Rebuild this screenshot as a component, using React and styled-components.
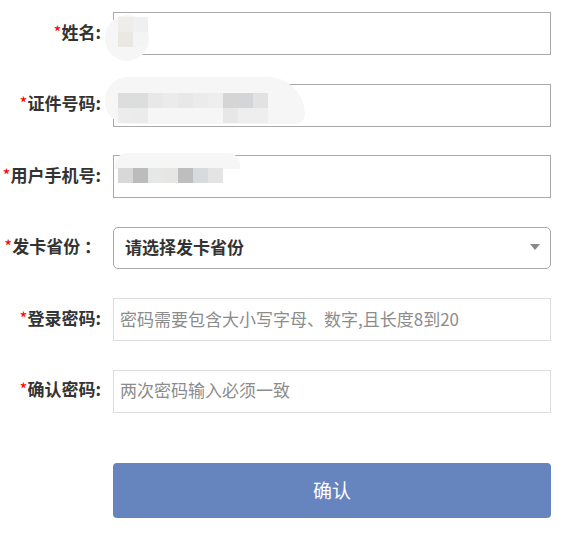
import React from "react";
import styled, { createGlobalStyle } from "styled-components";

const GlobalStyle = createGlobalStyle`
  body {
    margin: 0;
    background: #fff;
    font-family: "Noto Sans CJK SC", "Noto Sans", sans-serif;
  }
`;

const Form = styled.form`
  display: flex;
  flex-direction: column;
  gap: 28.5px;
  padding: 12px 0 0 0;
  width: 551px;
`;

const Row = styled.div`
  display: grid;
  grid-template-columns: 101px 438px;
  column-gap: 12px;
  align-items: center;
  height: 43px;
`;

const Label = styled.label`
  text-align: right;
  white-space: nowrap;
  font-size: 17px;
  font-weight: 700;
  color: #333;
  line-height: 1;
  margin-top: -5px;
`;

const Star = styled.span`
  color: #f00;
  font-weight: 400;
`;

const Field = styled.div`
  position: relative;
  height: 43px;
`;

const Input = styled.input`
  box-sizing: border-box;
  width: 100%;
  height: 100%;
  margin: 0;
  padding: 0 6px 3px;
  border: 1px solid ${(p) => (p.$light ? "#dddddd" : "#a9a9a9")};
  border-radius: 0;
  outline: none;
  background: #fff;
  font-family: "Noto Sans CJK SC", sans-serif;
  font-size: 17px;
  color: #333;
  &::placeholder {
    color: #8c8c8c;
  }
`;

const Select = styled.div`
  box-sizing: border-box;
  height: 42px;
  display: flex;
  align-items: center;
  justify-content: space-between;
  padding: 0 10px 4px 11px;
  border: 1px solid #a9a9a9;
  border-radius: 5px;
  font-size: 17px;
  font-weight: 700;
  color: #333;
`;

const Caret = styled.span`
  width: 0;
  height: 0;
  border-left: 5px solid transparent;
  border-right: 5px solid transparent;
  border-top: 6px solid #888;
  margin-top: 1px;
`;

const Blob = styled.div`
  position: absolute;
  background: #f6f6f6;
  pointer-events: none;
`;

const Mosaic = styled.div`
  position: absolute;
  display: grid;
  grid-auto-flow: column;
  grid-template-rows: repeat(${(p) => p.$rows}, 15px);
  grid-auto-columns: 15px;
  pointer-events: none;
`;

const Cell = styled.span`
  display: block;
`;

const Button = styled.button`
  margin: 22px 0 0 113px;
  width: 438px;
  height: 55px;
  padding-bottom: 3px;
  border: none;
  border-radius: 4px;
  background: #6685be;
  color: #fff;
  font-family: "Noto Sans CJK SC", sans-serif;
  font-size: 19px;
  cursor: pointer;
`;

function Cells({ cols }) {
  return cols.map((c, i) => (
    <Cell key={i} style={{ background: c || "transparent" }} />
  ));
}

export default function App() {
  return (
    <>
      <GlobalStyle />
      <Form onSubmit={(e) => e.preventDefault()}>
        <Row>
          <Label>
            <Star>*</Star>姓名:
          </Label>
          <Field>
            <Input />
            <Blob style={{ left: -8, top: 3, width: 44, height: 46, borderRadius: "50%" }} />
            <Mosaic $rows={2} style={{ left: 5, top: 5 }}>
              <Cells cols={["#efede9", "#eae8e3", "#eef0f2", "#f2f4f6"]} />
            </Mosaic>
          </Field>
        </Row>
        <Row>
          <Label>
            <Star>*</Star>证件号码:
          </Label>
          <Field>
            <Input />
            <Blob style={{ left: -8, top: -7, width: 200, height: 47, borderRadius: "24px 40px 10px 24px" }} />
            <Mosaic $rows={2} style={{ left: 5, top: 9 }}>
              <Cells
                cols={[
                  "#dddddd", "#ececec", "#dcdedd", "#ebebeb", "#e8e8e8", null,
                  "#ebebeb", null, "#e8e8e8", null, "#ebebeb", null, "#eeeeee", null,
                  "#d5d5d5", "#e7e7e7", "#d4d5d8", "#eeeeee", "#e2e2e2", "#eeeeee",
                ]}
              />
            </Mosaic>
          </Field>
        </Row>
        <Row>
          <Label>
            <Star>*</Star>用户手机号:
          </Label>
          <Field>
            <Input />
            <Blob style={{ left: 2, top: -2, width: 125, height: 16, borderRadius: "12px 12px 0 0" }} />
            <Mosaic $rows={1} style={{ left: 5, top: 13 }}>
              <Cells
                cols={["#d8d8d8", "#bcbcbc", "#e6e8e8", "#e6e6e4", "#bebebe", "#d8dadc", "#e4e4e4"]}
              />
            </Mosaic>
          </Field>
        </Row>
        <Row>
          <Label>
            <Star>*</Star>发卡省份 ：
          </Label>
          <Select>
            请选择发卡省份
            <Caret />
          </Select>
        </Row>
        <Row>
          <Label>
            <Star>*</Star>登录密码:
          </Label>
          <Field>
            <Input $light type="password" placeholder="密码需要包含大小写字母、数字,且长度8到20" />
          </Field>
        </Row>
        <Row>
          <Label>
            <Star>*</Star>确认密码:
          </Label>
          <Field>
            <Input $light type="password" placeholder="两次密码输入必须一致" />
          </Field>
        </Row>
        <Button type="submit">确认</Button>
      </Form>
    </>
  );
}
